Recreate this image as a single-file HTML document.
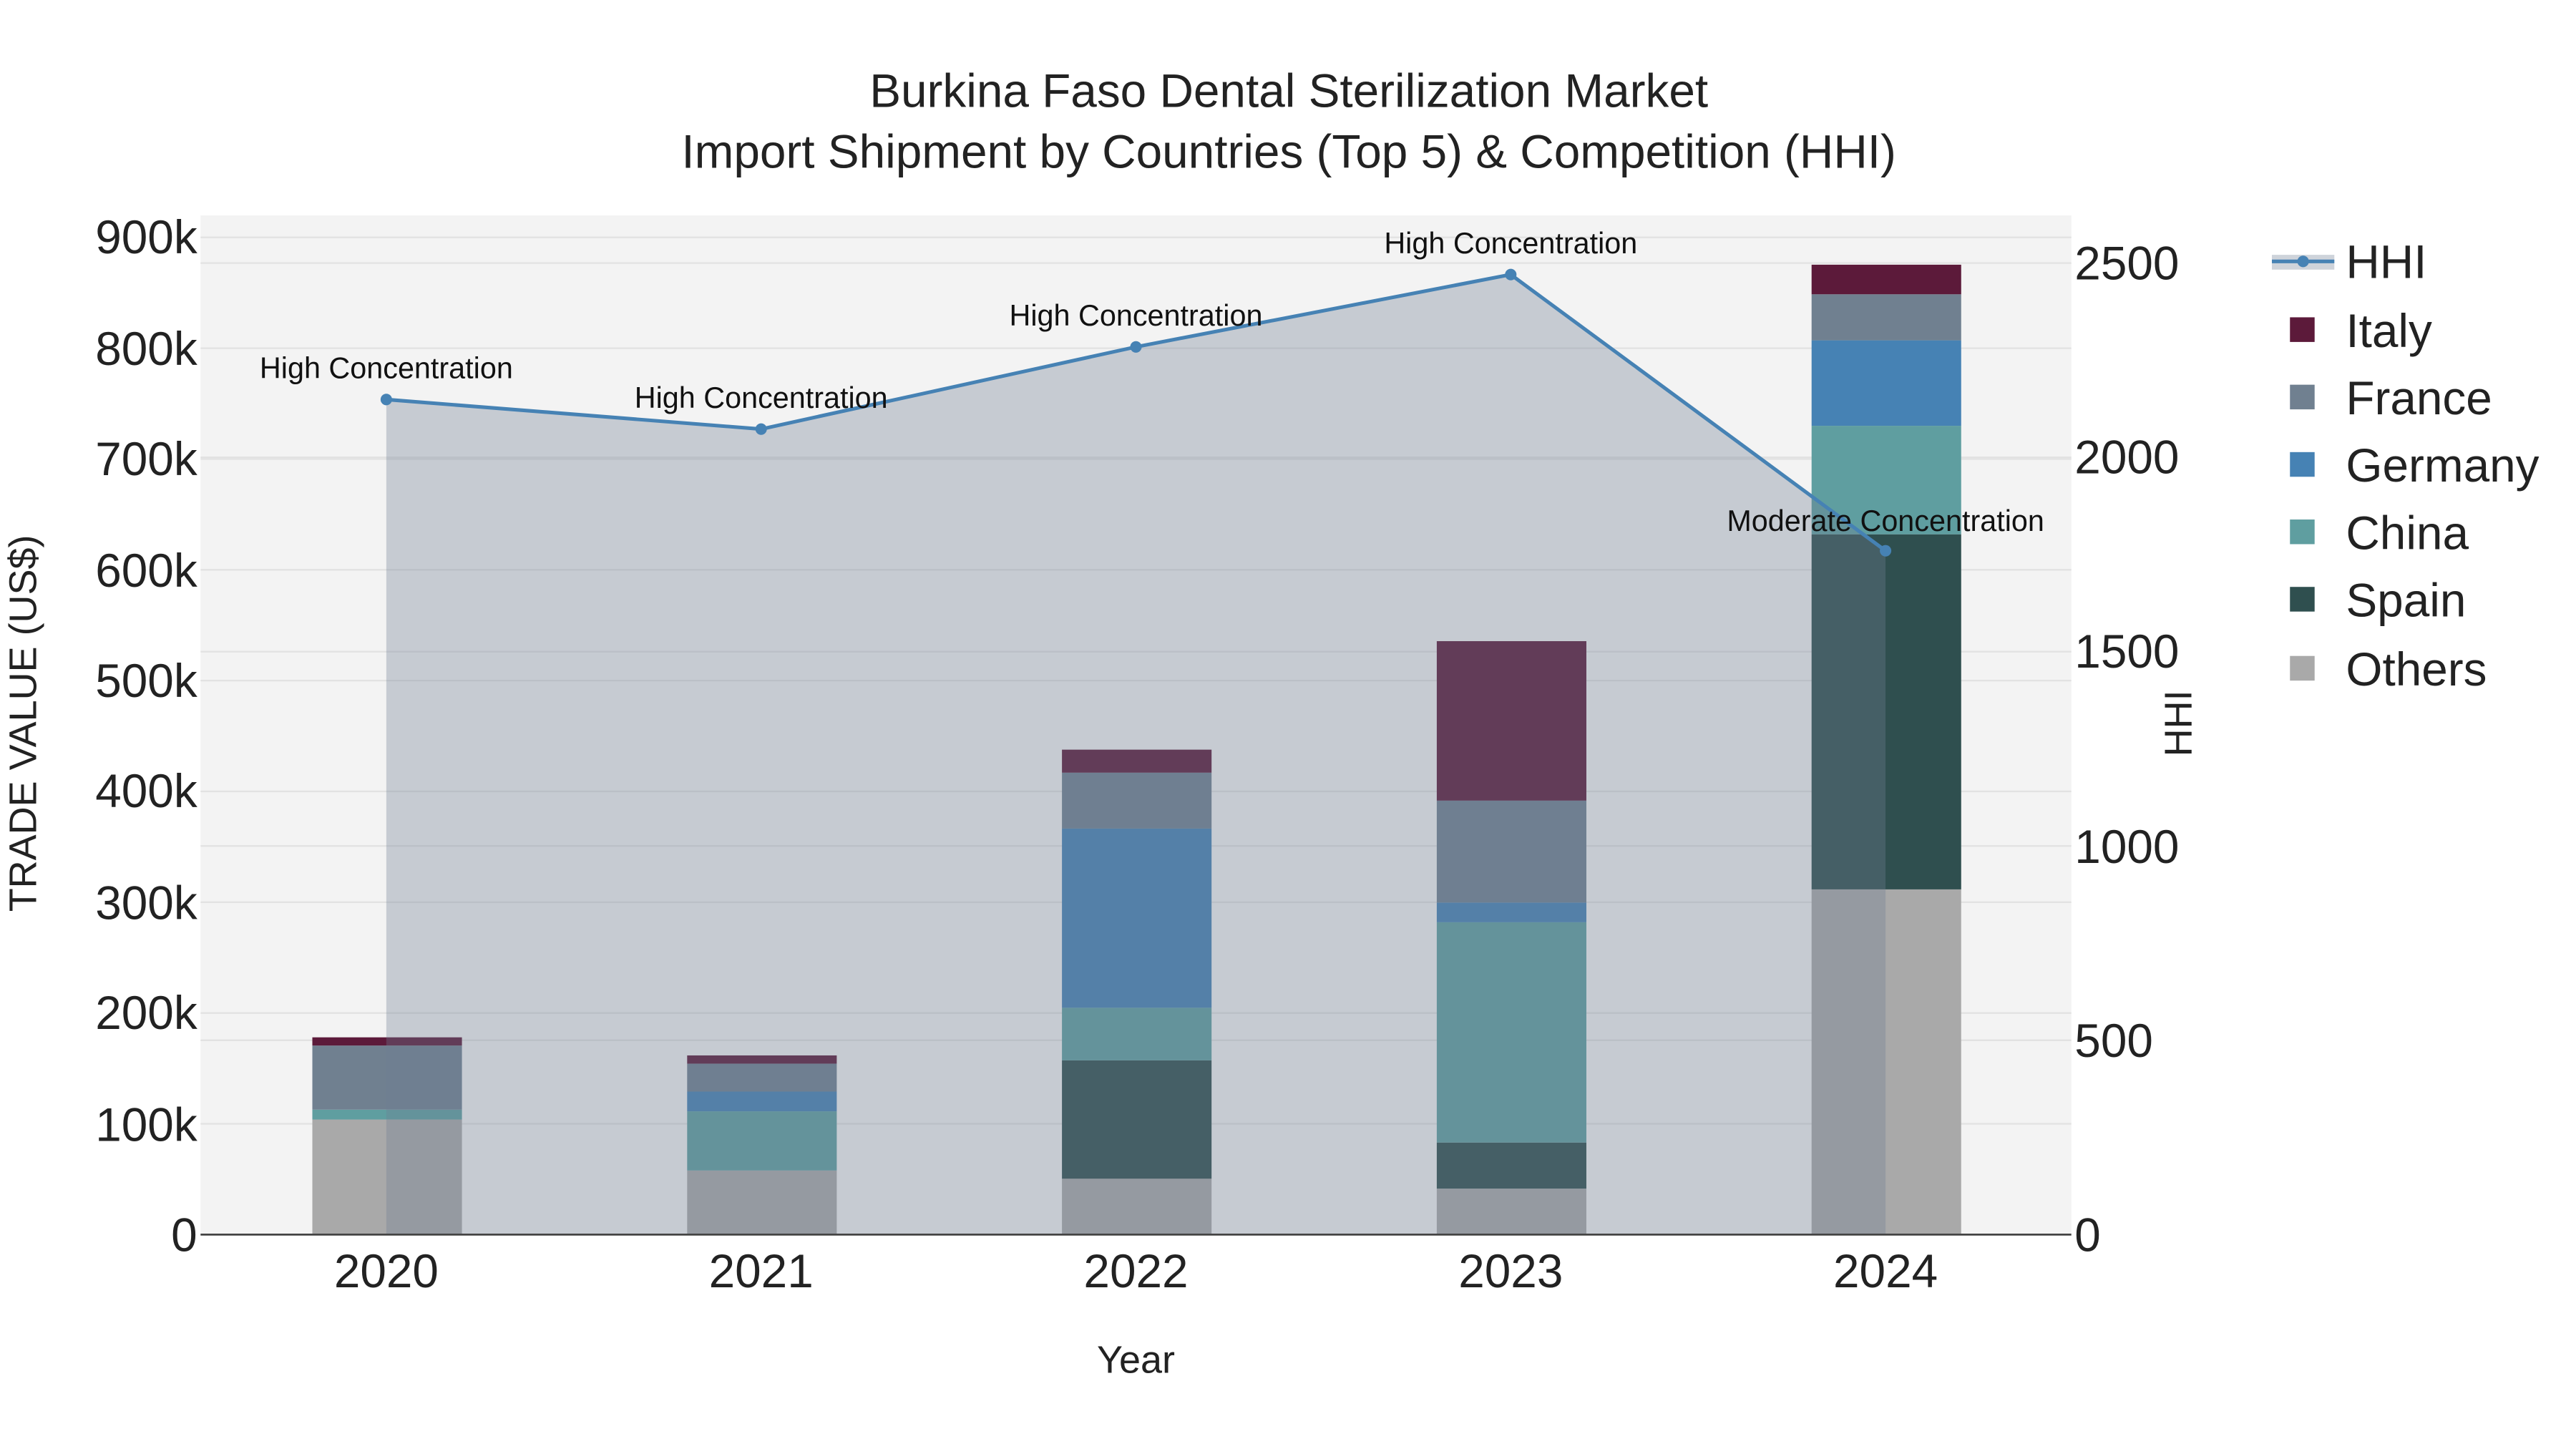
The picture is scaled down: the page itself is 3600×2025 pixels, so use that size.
<!DOCTYPE html>
<html><head><meta charset="utf-8"><style>
html,body{margin:0;padding:0;background:#fff;}
svg{display:block;}
text{font-family:"Liberation Sans",Arial,sans-serif;}
</style></head><body>
<svg width="3600" height="2025" viewBox="0 0 1567 881.4" xmlns="http://www.w3.org/2000/svg">
<rect x="0" y="0" width="1567" height="881.4" fill="#fff"/>
<rect x="122" y="131" width="1138" height="620" fill="#f3f3f3"/>
<g stroke="#e2e2e2" stroke-width="1">
<line x1="122" x2="1260" y1="683.6" y2="683.6"/><line x1="122" x2="1260" y1="616.2" y2="616.2"/>
<line x1="122" x2="1260" y1="548.8" y2="548.8"/><line x1="122" x2="1260" y1="481.4" y2="481.4"/>
<line x1="122" x2="1260" y1="414" y2="414"/><line x1="122" x2="1260" y1="346.6" y2="346.6"/>
<line x1="122" x2="1260" y1="279.2" y2="279.2"/><line x1="122" x2="1260" y1="211.8" y2="211.8"/>
<line x1="122" x2="1260" y1="144.4" y2="144.4"/>
<line x1="122" x2="1260" y1="632.8" y2="632.8"/><line x1="122" x2="1260" y1="514.6" y2="514.6"/>
<line x1="122" x2="1260" y1="396.4" y2="396.4"/><line x1="122" x2="1260" y1="278.2" y2="278.2"/>
<line x1="122" x2="1260" y1="160" y2="160"/>
</g>
<g>
<rect x="190" y="681" width="91" height="70" fill="#a9a9a9"/>
<rect x="190" y="675" width="91" height="6" fill="#5f9ea0"/>
<rect x="190" y="636" width="91" height="39" fill="#708090"/>
<rect x="190" y="631" width="91" height="5" fill="#5c1a3a"/>

<rect x="418" y="712" width="91" height="39" fill="#a9a9a9"/>
<rect x="418" y="676" width="91" height="36" fill="#5f9ea0"/>
<rect x="418" y="664" width="91" height="12" fill="#4682b4"/>
<rect x="418" y="647" width="91" height="17" fill="#708090"/>
<rect x="418" y="642" width="91" height="5" fill="#5c1a3a"/>

<rect x="646" y="717" width="91" height="34" fill="#a9a9a9"/>
<rect x="646" y="645" width="91" height="72" fill="#2f4f4f"/>
<rect x="646" y="613" width="91" height="32" fill="#5f9ea0"/>
<rect x="646" y="504" width="91" height="109" fill="#4682b4"/>
<rect x="646" y="470" width="91" height="34" fill="#708090"/>
<rect x="646" y="456" width="91" height="14" fill="#5c1a3a"/>

<rect x="874" y="723" width="91" height="28" fill="#a9a9a9"/>
<rect x="874" y="695" width="91" height="28" fill="#2f4f4f"/>
<rect x="874" y="561" width="91" height="134" fill="#5f9ea0"/>
<rect x="874" y="549" width="91" height="12" fill="#4682b4"/>
<rect x="874" y="487" width="91" height="62" fill="#708090"/>
<rect x="874" y="390" width="91" height="97" fill="#5c1a3a"/>

<rect x="1102" y="541" width="91" height="210" fill="#a9a9a9"/>
<rect x="1102" y="325" width="91" height="216" fill="#2f4f4f"/>
<rect x="1102" y="259" width="91" height="66" fill="#5f9ea0"/>
<rect x="1102" y="207" width="91" height="52" fill="#4682b4"/>
<rect x="1102" y="179" width="91" height="28" fill="#708090"/>
<rect x="1102" y="161" width="91" height="18" fill="#5c1a3a"/>
</g>
<polygon points="235,751 235,243 463,261 691,211 919,167 1147,335 1147,751" fill="rgba(112,126,146,0.34)"/>
<polyline points="235,243 463,261 691,211 919,167 1147,335" fill="none" stroke="#4682b4" stroke-width="2.2"/>
<g fill="#4682b4"><circle cx="235" cy="243" r="3.5"/><circle cx="463" cy="261" r="3.5"/><circle cx="691" cy="211" r="3.5"/><circle cx="919" cy="167" r="3.5"/><circle cx="1147" cy="335" r="3.5"/></g>
<line x1="122" x2="1260" y1="751" y2="751" stroke="#444" stroke-width="1.2"/>
<g font-size="18" fill="#111" text-anchor="middle">
<text x="235" y="230">High Concentration</text>
<text x="463" y="248">High Concentration</text>
<text x="691" y="198">High Concentration</text>
<text x="919" y="154">High Concentration</text>
<text x="1147" y="323">Moderate Concentration</text>
</g>
<g text-anchor="middle" fill="#222" font-size="28.6">
<text x="784" y="65">Burkina Faso Dental Sterilization Market</text>
<text x="784" y="102">Import Shipment by Countries (Top 5) &amp; Competition (HHI)</text>
</g>
<g font-size="28.6" fill="#222" text-anchor="end">
<text x="120" y="761">0</text><text x="120" y="694">100k</text><text x="120" y="626">200k</text>
<text x="120" y="559">300k</text><text x="120" y="491">400k</text><text x="120" y="424">500k</text>
<text x="120" y="357">600k</text><text x="120" y="289">700k</text><text x="120" y="222">800k</text>
<text x="120" y="154">900k</text>
</g>
<g font-size="28.6" fill="#222" text-anchor="start">
<text x="1262" y="761">0</text><text x="1262" y="643">500</text><text x="1262" y="525">1000</text>
<text x="1262" y="406">1500</text><text x="1262" y="288">2000</text><text x="1262" y="170">2500</text>
</g>
<g font-size="28.6" fill="#222" text-anchor="middle">
<text x="235" y="783">2020</text><text x="463" y="783">2021</text><text x="691" y="783">2022</text>
<text x="919" y="783">2023</text><text x="1147" y="783">2024</text>
</g>
<text x="691" y="835" font-size="23.5" fill="#222" text-anchor="middle">Year</text>
<text transform="translate(22,440) rotate(-90)" font-size="23.5" fill="#222" text-anchor="middle">TRADE VALUE (US$)</text>
<text transform="translate(1333,440) rotate(-90)" font-size="23.5" fill="#222" text-anchor="middle">HHI</text>
<rect x="1382" y="155" width="38" height="9" fill="rgba(112,126,146,0.34)"/>
<line x1="1382" x2="1420" y1="159" y2="159" stroke="#4682b4" stroke-width="2.2"/>
<circle cx="1401" cy="159" r="3.5" fill="#4682b4"/>
<g font-size="28.6" fill="#222">
<text x="1427" y="169">HHI</text>
<text x="1427" y="211">Italy</text>
<text x="1427" y="252">France</text>
<text x="1427" y="293">Germany</text>
<text x="1427" y="334">China</text>
<text x="1427" y="375">Spain</text>
<text x="1427" y="417">Others</text>
</g>
<rect x="1393" y="193" width="15" height="15" fill="#5c1a3a"/>
<rect x="1393" y="234" width="15" height="15" fill="#708090"/>
<rect x="1393" y="275" width="15" height="15" fill="#4682b4"/>
<rect x="1393" y="316" width="15" height="15" fill="#5f9ea0"/>
<rect x="1393" y="357" width="15" height="15" fill="#2f4f4f"/>
<rect x="1393" y="399" width="15" height="15" fill="#a9a9a9"/>
</svg>
</body></html>
